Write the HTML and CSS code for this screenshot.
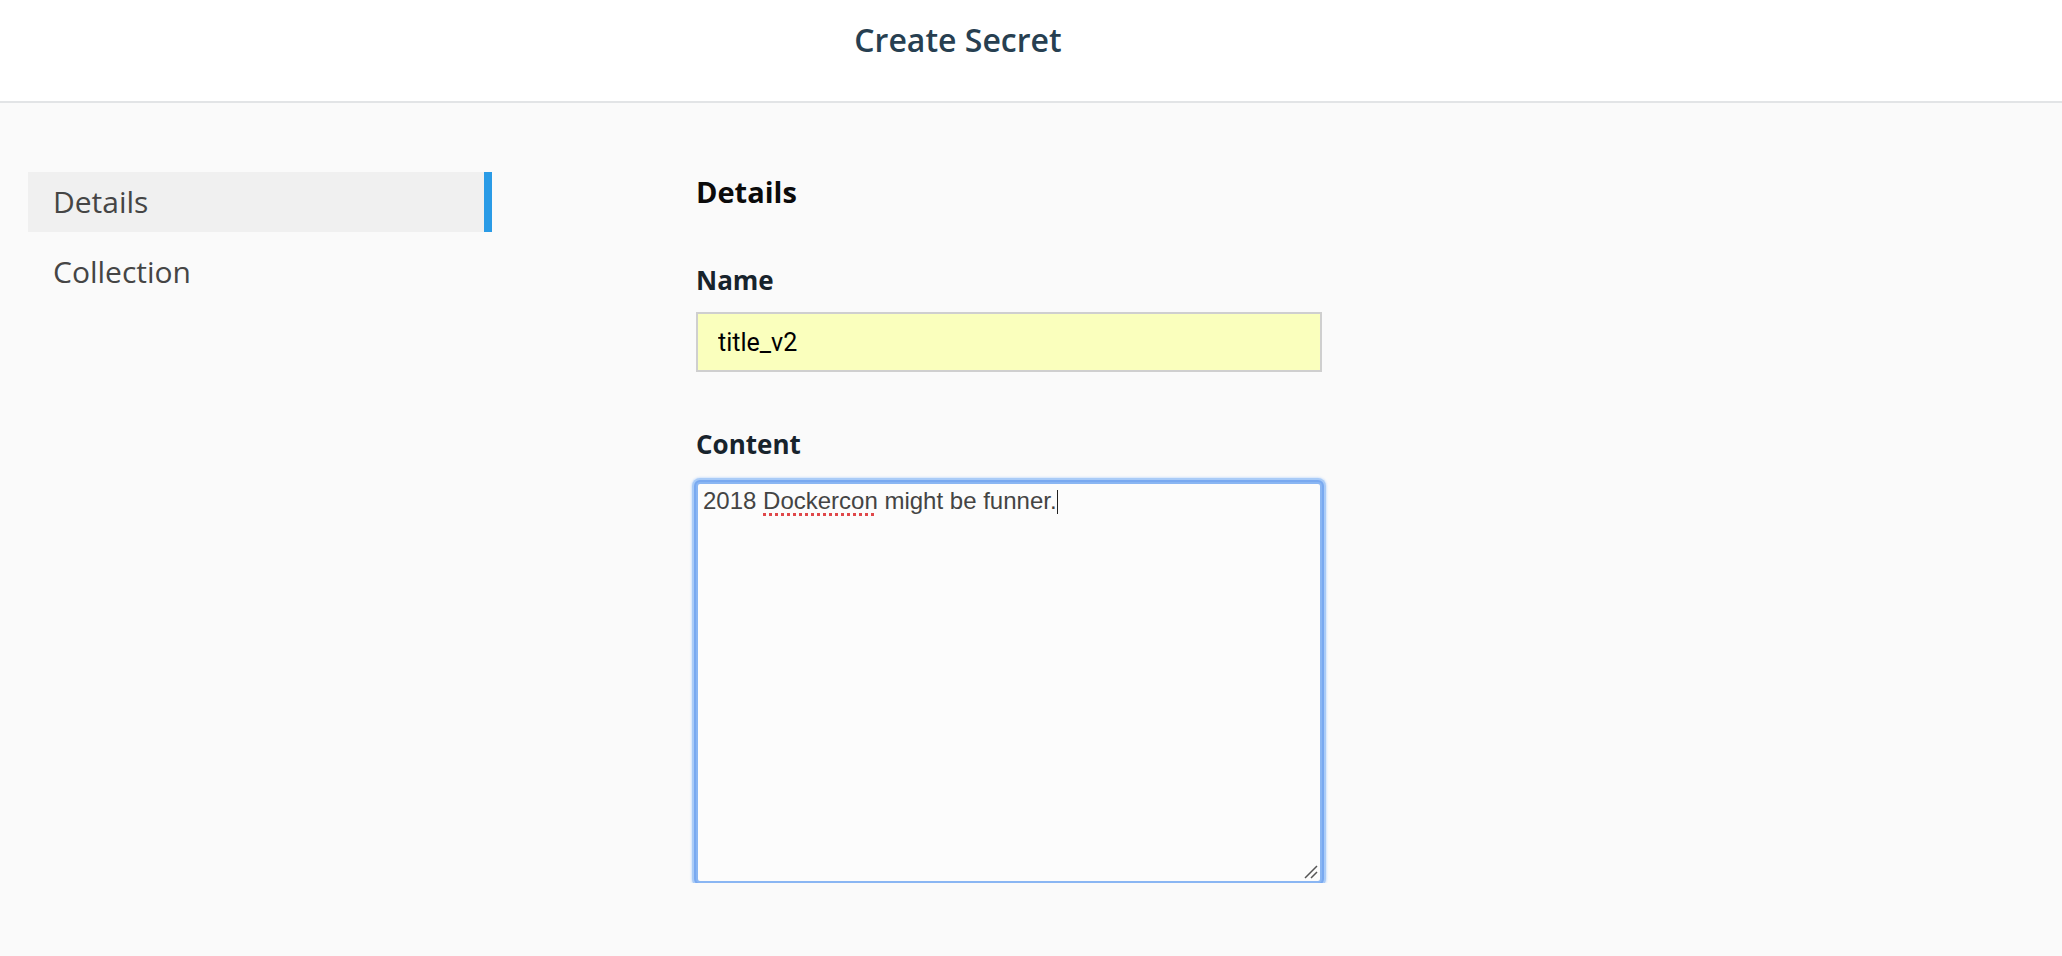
FILE: index.html
```html
<!DOCTYPE html>
<html lang="en">
<head>
<meta charset="utf-8">
<title>Create Secret</title>
<link rel="stylesheet" href="styles.css">
</head>
<body>
<header class="topbar">
  <h1 class="page-title">Create Secret</h1>
</header>
<div class="page">
  <nav class="sidenav">
    <a class="sidenav-item is-active">Details</a>
    <a class="sidenav-item">Collection</a>
  </nav>
  <main class="form">
    <h2 class="section-title">Details</h2>
    <label class="field-label" for="name">Name</label>
    <input id="name" class="text-input" type="text" value="title_v2">
    <div class="field-label content-label">Content</div>
    <div class="textarea" role="textbox">
      <span class="ta-text">2018 <span class="misspelled">Dockercon</span> might be funner.</span><span class="caret"></span>
      <svg class="grip" width="14" height="14" viewBox="0 0 14 14"><path d="M1 13 L13 1 M7 13 L13 7" stroke="#555" stroke-width="1.5" fill="none"/></svg>
    </div>
  </main>
</div>
</body>
</html>
```
FILE: styles.css
```css
html, body {
  margin: 0;
  padding: 0;
}
body {
  background: #fafafa;
  font-family: "Open Sans", "Liberation Sans", sans-serif;
  color: #444;
}
.topbar {
  height: 101px;
  background: #fff;
  border-bottom: 2px solid #e2e4e6;
  display: flex;
  justify-content: center;
  align-items: flex-start;
  padding-right: 146px;
  box-sizing: content-box;
}
.page-title {
  margin: 20px 0 0;
  font-size: 32px;
  line-height: 40px;
  font-weight: 600;
  color: #273f51;
}
.page {
  display: flex;
  padding-top: 69px;
}
.sidenav {
  margin-left: 28px;
  width: 464px;
  display: flex;
  flex-direction: column;
  gap: 10px;
}
.sidenav-item {
  display: block;
  height: 60px;
  line-height: 60px;
  font-size: 30px;
  padding-left: 25px;
  color: #454545;
  box-sizing: border-box;
}
.sidenav-item.is-active {
  background: #f0f0f0;
  border-right: 8px solid #2a9be6;
}
.form {
  margin-left: 204px;
  width: 626px;
  display: flex;
  flex-direction: column;
}
.section-title {
  margin: 2px 0 0;
  font-size: 29px;
  line-height: 36px;
  font-weight: 700;
  color: #0b0b0b;
}
.field-label {
  display: block;
  margin-top: 54px;
  font-size: 26px;
  line-height: 32px;
  font-weight: 700;
  color: #17232c;
}
.content-label {
  margin-top: 56px;
}
.text-input {
  margin: 16px 0 0;
  height: 60px;
  box-sizing: border-box;
  border: 2px solid #cfcfcf;
  background: #faffbd;
  padding: 0 20px;
  font-family: Roboto, "Liberation Sans", sans-serif;
  font-size: 25px;
  color: #000;
  outline: none;
}
.textarea {
  position: relative;
  margin-top: 22px;
  height: 401px;
  box-sizing: border-box;
  border: 2px solid #8ab6f3;
  border-radius: 4px;
  box-shadow: 0 0 0 2px #79a9f0, 0 0 0 4px #a9cbf7, 0 0 2px 5px #d3e4fb;
  background: #fcfcfc;
  padding: 4px 5px;
  font-family: "Liberation Sans", Arial, sans-serif;
  font-size: 24px;
  line-height: 26px;
  color: #444;
}
.misspelled {
  text-decoration: underline dotted #e0484a;
  text-decoration-thickness: 3px;
  text-underline-offset: 4px;
}
.caret {
  display: inline-block;
  width: 1px;
  height: 24px;
  background: #222;
  vertical-align: -5px;
}
.grip {
  position: absolute;
  right: 2px;
  bottom: 2px;
}
```
